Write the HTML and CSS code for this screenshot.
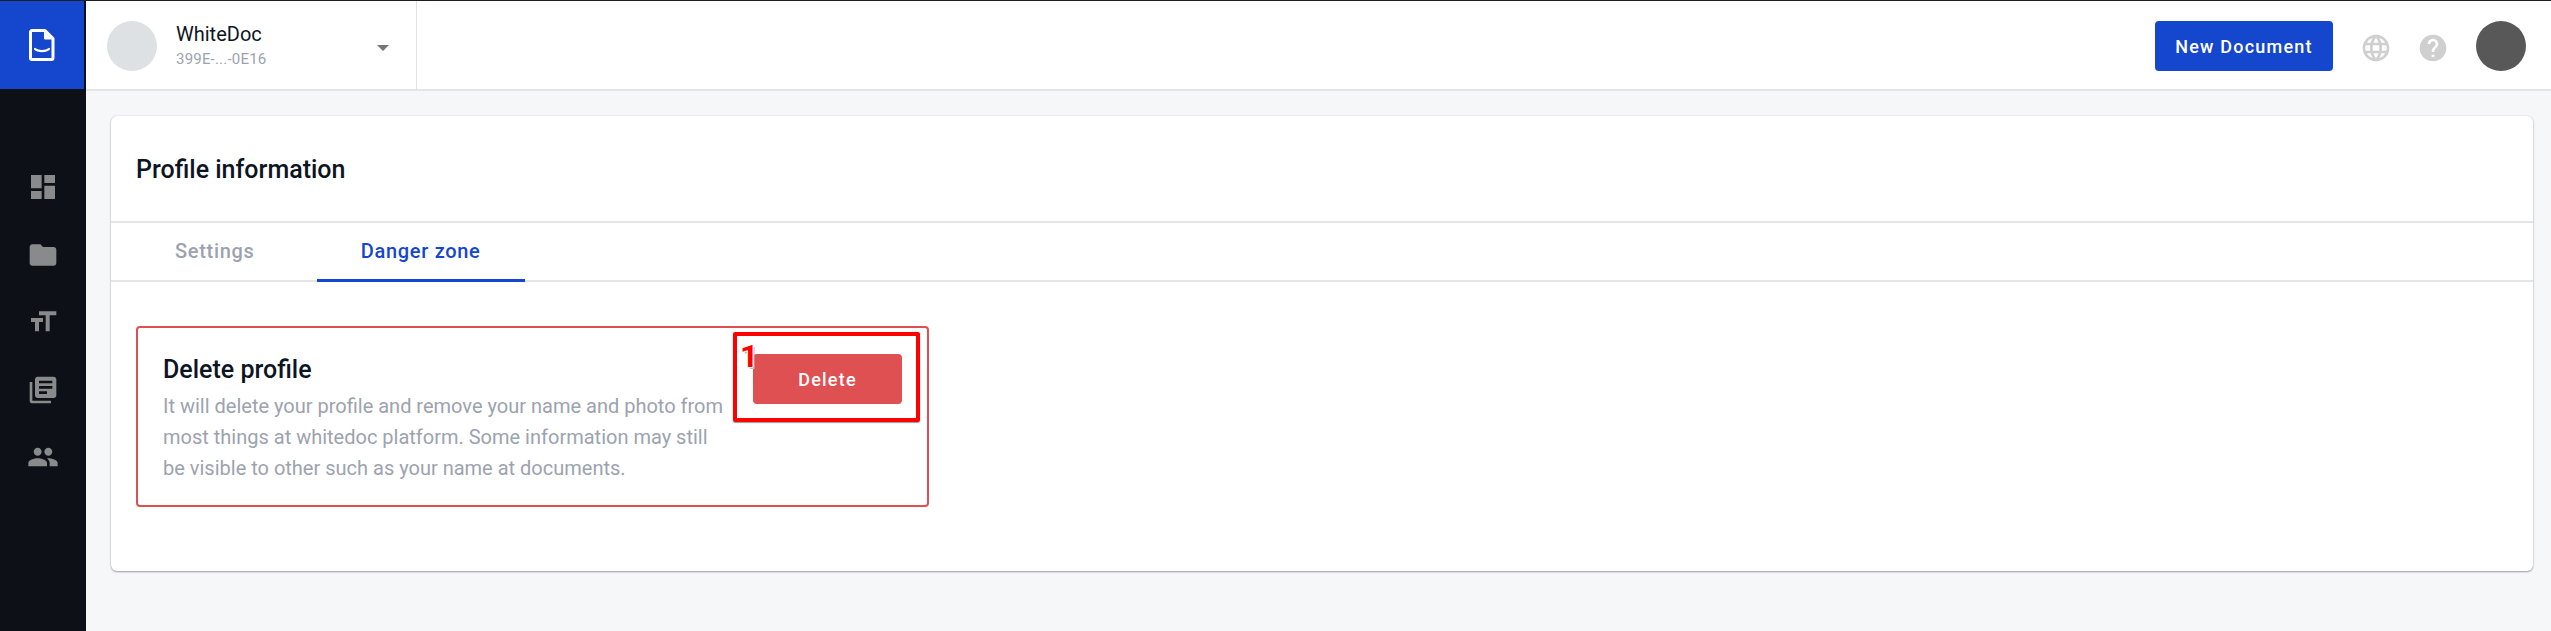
FILE: index.html
```html
<!DOCTYPE html>
<html lang="en">
<head>
<meta charset="utf-8">
<title>Profile information</title>
<link rel="stylesheet" href="styles.css">
</head>
<body>
<div class="app">
  <aside class="sidebar">
    <div class="logo">
      <svg width="26" height="32" viewBox="0 0 26 32" fill="none" stroke="#fff" stroke-width="3"><path d="M3 1.5H16L24 9.5V29a1.5 1.5 0 0 1-1.5 1.5H3A1.5 1.5 0 0 1 1.5 29V3A1.5 1.5 0 0 1 3 1.5Z" stroke-linejoin="round"/><path d="M15.5 3V10H23" fill="#fff" stroke-width="1"/><path d="M6 20C9 22.8 17 22.8 20 20" stroke-width="2.2" stroke-linecap="round"/></svg>
    </div>
    <nav class="side-nav">
      <svg class="side-icon" viewBox="0 0 24 24"><path d="M3 13h8V3H3v10zm0 8h8v-6H3v6zm10 0h8V11h-8v10zm0-18v6h8V3h-8z"/></svg>
      <svg class="side-icon" viewBox="0 0 24 24"><path d="M10 4H4c-1.1 0-1.99.9-1.99 2L2 18c0 1.1.9 2 2 2h16c1.1 0 2-.9 2-2V8c0-1.1-.9-2-2-2h-8l-2-2z"/></svg>
      <svg class="side-icon" viewBox="0 0 24 24"><path d="M9 4v3h5v12h3V7h5V4H9zm-6 8h3v7h3v-7h3V9H3v3z"/></svg>
      <svg class="side-icon" viewBox="0 0 24 24"><path d="M4 6H2v14c0 1.1.9 2 2 2h14v-2H4V6zm16-4H8c-1.1 0-2 .9-2 2v12c0 1.1.9 2 2 2h12c1.1 0 2-.9 2-2V4c0-1.1-.9-2-2-2zm-1 9H9V9h10v2zm-4 4H9v-2h6v2zm4-8H9V5h10v2z"/></svg>
      <svg class="side-icon" viewBox="0 0 24 24"><path d="M16 11c1.66 0 2.99-1.34 2.99-3S17.66 5 16 5c-1.66 0-3 1.34-3 3s1.34 3 3 3zm-8 0c1.66 0 2.99-1.34 2.99-3S9.66 5 8 5C6.34 5 5 6.34 5 8s1.34 3 3 3zm0 2c-2.33 0-7 1.17-7 3.5V19h14v-2.5c0-2.33-4.67-3.5-7-3.5zm8 0c-.29 0-.62.02-.97.05 1.16.84 1.97 1.97 1.97 3.45V19h6v-2.5c0-2.33-4.67-3.5-7-3.5z"/></svg>
    </nav>
  </aside>
  <div class="main">
    <header class="topbar">
      <div class="account">
        <div class="account-avatar"></div>
        <div class="account-text">
          <div class="account-name">WhiteDoc</div>
          <div class="account-id">399E-...-0E16</div>
        </div>
        <div class="caret"></div>
      </div>
      <div class="top-actions">
        <button class="btn btn-primary">New Document</button>
        <svg class="top-icon" viewBox="0 0 24 24"><path d="M11.99 2C6.47 2 2 6.48 2 12s4.47 10 9.99 10C17.52 22 22 17.52 22 12S17.52 2 11.99 2zm6.93 6h-2.95c-.32-1.25-.78-2.45-1.38-3.56 1.84.63 3.37 1.91 4.33 3.56zM12 4.04c.83 1.2 1.48 2.53 1.91 3.96h-3.82c.43-1.43 1.08-2.76 1.91-3.96zM4.26 14C4.1 13.36 4 12.69 4 12s.1-1.36.26-2h3.38c-.08.66-.14 1.32-.14 2 0 .68.06 1.34.14 2H4.26zm.82 2h2.95c.32 1.25.78 2.45 1.38 3.56-1.84-.63-3.37-1.9-4.33-3.56zm2.95-8H5.08c.96-1.66 2.49-2.93 4.33-3.56C8.81 5.55 8.35 6.75 8.03 8zM12 19.96c-.83-1.2-1.48-2.53-1.91-3.96h3.82c-.43 1.43-1.08 2.76-1.91 3.96zM14.34 14H9.66c-.09-.66-.16-1.32-.16-2 0-.68.07-1.35.16-2h4.68c.09.65.16 1.32.16 2 0 .68-.07 1.34-.16 2zm.25 5.56c.6-1.11 1.06-2.31 1.38-3.56h2.95c-.96 1.65-2.49 2.93-4.33 3.56zM16.36 14c.08-.66.14-1.32.14-2 0-.68-.06-1.34-.14-2h3.38c.16.64.26 1.31.26 2s-.1 1.36-.26 2h-3.38z"/></svg>
        <svg class="top-icon" viewBox="0 0 24 24"><path d="M12 2C6.48 2 2 6.48 2 12s4.48 10 10 10 10-4.48 10-10S17.52 2 12 2zm1 17h-2v-2h2v2zm2.07-7.75l-.9.92C13.45 12.9 13 13.5 13 15h-2v-.5c0-1.1.45-2.1 1.17-2.83l1.24-1.26c.37-.36.59-.86.59-1.41 0-1.1-.9-2-2-2s-2 .9-2 2H8c0-2.21 1.79-4 4-4s4 1.79 4 4c0 .88-.36 1.68-.93 2.25z"/></svg>
        <div class="user-avatar"></div>
      </div>
    </header>
    <main class="content">
      <section class="card">
        <h1 class="card-title">Profile information</h1>
        <div class="tabs">
          <div class="tab">Settings</div>
          <div class="tab tab-active">Danger zone</div>
        </div>
        <div class="card-body">
          <div class="danger-box">
            <div class="danger-text">
              <h2 class="danger-title">Delete profile</h2>
              <p class="danger-desc">It will delete your profile and remove your name and photo from most things at whitedoc platform. Some information may still be visible to other such as your name at documents.</p>
            </div>
            <div class="annotated">
              <button class="btn btn-danger">Delete</button>
              <div class="mark"><span class="mark-num">1</span></div>
            </div>
          </div>
        </div>
      </section>
    </main>
  </div>
</div>
</body>
</html>
```
FILE: styles.css
```css
* { box-sizing: border-box; }
html, body { margin: 0; height: 100%; }
body {
  font-family: Roboto, "Liberation Sans", sans-serif;
  background: #f6f7f9;
  overflow: hidden;
}
.app { display: flex; height: 631px; border-top: 1px solid #1c1f24; }
.sidebar { width: 86px; flex: none; background: #0d1117; }
.logo {
  width: 84px; height: 88px;
  background: #1546ce;
  display: flex; align-items: center; justify-content: center;
}
.side-nav {
  display: flex; flex-direction: column; align-items: center;
  gap: 35.5px; padding-top: 82px;
}
.side-icon { width: 32px; height: 32px; fill: #888a8c; display: block; }
.main { flex: 1; min-width: 0; display: flex; flex-direction: column; }
.topbar {
  height: 90px; flex: none;
  background: #fff; border-bottom: 2px solid #e3e5e8;
  display: flex; justify-content: space-between; align-items: stretch;
}
.account {
  width: 331px; padding: 20px 0 0 21px;
  border-right: 1px solid #dfe2e6;
  display: flex; align-items: flex-start;
}
.account-avatar { width: 50px; height: 50px; border-radius: 50%; background: #dee1e4; flex: none; }
.account-text { margin-left: 19px; width: 201px; }
.account-name { font-size: 20px; line-height: 26px; color: #0d1523; }
.account-id { font-size: 15px; line-height: 20px; letter-spacing: .2px; color: #9ca3af; margin-top: 2px; }
.caret {
  width: 0; height: 0; margin-top: 24px;
  border-left: 6.5px solid transparent; border-right: 6.5px solid transparent;
  border-top: 6.5px solid #757575;
}
.top-actions { display: flex; align-items: flex-start; padding: 20px 25px 0 0; }
.btn {
  font-family: inherit; font-weight: 500; font-size: 18px; letter-spacing: 1.2px;
  color: #fff; border: 0; height: 50px; border-radius: 4px; padding: 0;
  display: block;
}
.btn-primary { width: 178px; background: #1546ce; margin-right: 27px; }
.top-icon { width: 32px; height: 32px; fill: #cfcfcf; margin: 11px 0 0; display: block; }
.top-icon + .top-icon { margin-left: 25px; }
.user-avatar { width: 50px; height: 50px; border-radius: 50%; background: #585858; margin-left: 27px; }
.content { padding: 25px 18px 0 25px; flex: none; }
.card {
  height: 455px; background: #fff; border-radius: 6px;
  box-shadow: 0 1px 2px rgba(0,0,0,.35), 0 0 2px rgba(0,0,0,.12);
  display: flex; flex-direction: column;
}
.card-title {
  margin: 0; height: 107px; padding: 0 0 0 25px;
  font-size: 25px; font-weight: 500; line-height: 108px; color: #0d1523;
  border-bottom: 2px solid #e3e5e8;
}
.tabs { display: flex; height: 59px; border-bottom: 2px solid #e3e5e8; padding-left: 20px; flex: none; }
.tab {
  font-size: 20px; font-weight: 500; letter-spacing: .7px;
  color: #9ca3af; line-height: 57px; padding: 0 44px; height: 59px;
  margin-right: 18px;
}
.tab-active { color: #1546ce; border-bottom: 3px solid #1546ce; width: 208px; padding: 0; text-align: center; }
.card-body { padding: 44px 0 0 25px; }
.danger-box {
  width: 793px; height: 181px;
  border: 2px solid #e04f51; border-radius: 4px;
  padding: 27px 0 0 25px;
  display: flex; align-items: flex-start;
}
.danger-text { width: 565px; }
.danger-title { margin: 0 0 6px; font-size: 25px; font-weight: 500; line-height: 30px; color: #0d1523; }
.danger-desc { margin: 0; font-size: 20px; line-height: 31px; color: #9ca3af; }
.annotated { margin-left: 25px; margin-top: -1px; position: relative; }
.btn-danger { width: 149px; background: #df5052; }
.mark {
  position: absolute; left: -20px; top: -22px; width: 187px; height: 90px;
  border: 4px solid #fe0000; border-radius: 2px;
  box-shadow: 0 1px 1px rgba(0,0,0,.4);
}
.mark-num {
  position: absolute; left: 3px; top: 6px;
  font-size: 32px; font-weight: 700; line-height: 28px; color: #fe0000;
  text-shadow: 1px 0 0 #fff, -1px 0 0 #fff, 0 1px 0 #fff, 0 -1px 0 #fff, 2px 2px 0 #bbb;
}
```
